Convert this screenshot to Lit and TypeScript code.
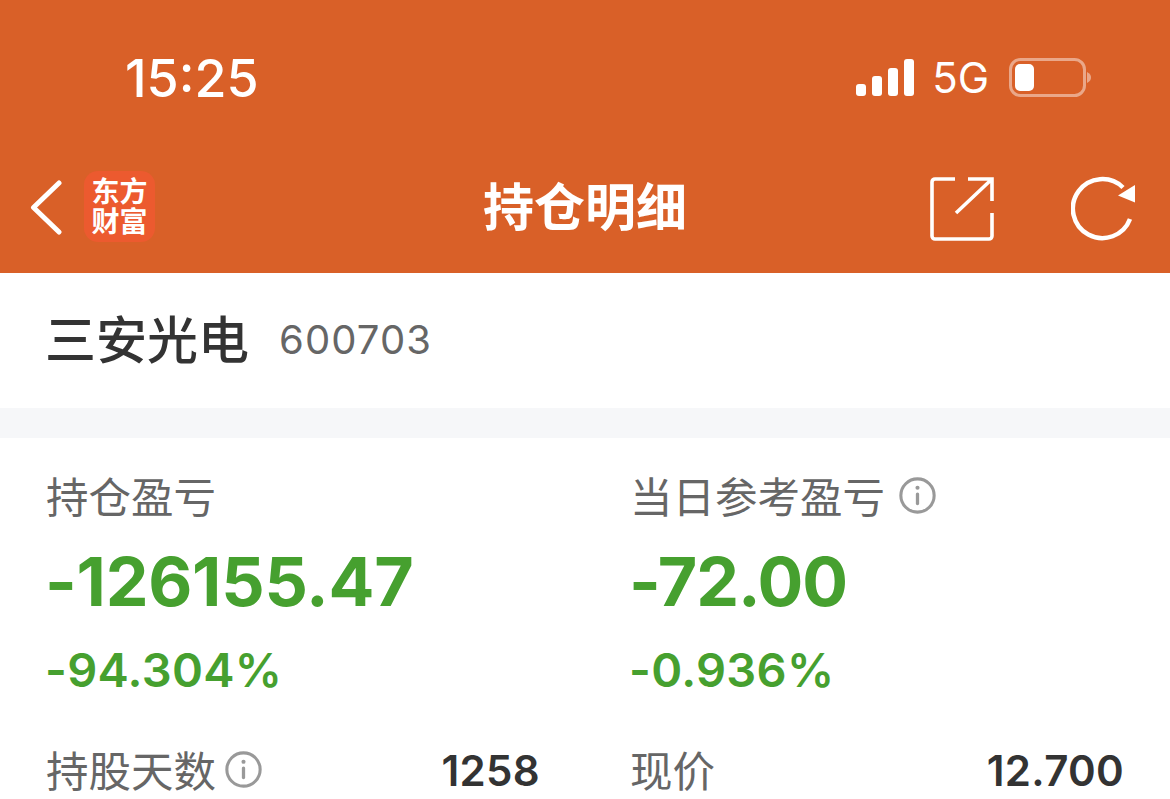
import { LitElement, html, css, svg } from "lit";
import { customElement } from "lit/decorators.js";

const info = svg`<svg class="info" viewBox="0 0 36 36" width="37" height="37"><circle cx="18" cy="18" r="16.2" fill="none" stroke="#999" stroke-width="3"/><circle cx="18" cy="10.5" r="2" fill="#999"/><rect x="16.4" y="15" width="3.2" height="12.5" rx="1.6" fill="#999"/></svg>`;

@customElement("app-root")
export class AppRoot extends LitElement {
  static styles = css`
    :host { display: block; width: 1170px; height: 799px; overflow: hidden; background: #fff;
      font-family: Inter, "Noto Sans CJK SC", sans-serif; }
    .head { background: #d96028; height: 273px; color: #fff; display: flex; flex-direction: column; }
    .status { height: 153px; display: flex; align-items: flex-start; padding: 53px 80px 0 125px; box-sizing: border-box; }
    .time { font-size: 52px; line-height: 52px; font-weight: 500; flex: 1; }
    .sig { margin: 6px 18px 0 0; display: block; }
    .net { font-size: 42px; line-height: 50px; font-weight: 400; margin: 0 20px 0 0; }
    .batt { margin-top: 5px; margin-right: -1px; display: block; }
    .nav { flex: 1; display: flex; align-items: flex-start; position: relative; padding: 20px 35px 0 30px; }
    .back { margin-top: 7px; display: block; }
    .logo { width: 71px; height: 71px; margin: -2px 0 0 18px; box-sizing: border-box; background: #ec5a2f; border-radius: 14px;
      font-size: 28px; line-height: 30px; font-weight: 700; text-align: center; padding-top: 4px;
      font-family: "Noto Sans CJK SC", sans-serif; }
    .title { position: absolute; left: 200px; right: 200px; top: 21px; text-align: center; font-size: 51px; line-height: 60px; font-weight: 700;
      font-family: "Noto Sans CJK SC", sans-serif; }
    .spacer { flex: 1; }
    .share { margin: 4px 77px 0 0; display: block; }
    .refresh { margin-top: 3px; display: block; }
    .name { height: 135px; display: flex; align-items: center; padding: 0 0 0 45px; gap: 30px; }
    .name b { font-size: 51px; font-weight: 500; color: #333; margin-bottom: 8px; font-family: "Noto Sans CJK SC", sans-serif; }
    .name span { font-size: 40px; color: #666; letter-spacing: 1.1px; margin-bottom: 2px; }
    .gap { height: 30px; background: #f6f7f9; }
    .grid { display: grid; grid-template-columns: 494px 494px; column-gap: 90px; padding: 30px 0 0 46px; }
    .label { font-size: 42.5px; line-height: 54px; color: #666; display: flex; align-items: center; gap: 14px;
      font-family: "Noto Sans CJK SC", sans-serif; }
    .big { font-size: 68px; line-height: 88px; font-weight: 650; color: #46a02f; letter-spacing: -1.1px; margin: 15px 0 0 -1px; }
    .big.long { letter-spacing: -0.25px; }
    .pct { font-size: 47px; line-height: 60px; font-weight: 600; color: #46a02f; letter-spacing: 0.3px; margin: 15px 0 0 -1px; }
    .row { display: flex; justify-content: space-between; align-items: center; margin-top: 42px; }
    .row strong { font-size: 42px; font-weight: 600; color: #333; margin-top: 2px; letter-spacing: 0.3px; }
    .row .info { margin-left: -5px; }
    .info { display: block; }
  `;
  render() {
    return html`
      <div class="head">
        <div class="status">
          <div class="time">15:25</div>
          <svg class="sig" width="58" height="38" viewBox="0 0 58 38" fill="#fff">
            <rect x="0" y="25" width="10" height="12" rx="3"/><rect x="16" y="17" width="10" height="20" rx="3"/><rect x="32" y="9" width="10" height="28" rx="3"/><rect x="48" y="0" width="10" height="37" rx="3"/>
          </svg>
          <div class="net">5G</div>
          <svg class="batt" width="82" height="40" viewBox="0 0 82 40">
            <rect x="1.500" y="1.500" width="74" height="36" rx="10" fill="none" stroke="#fff" stroke-opacity=".45" stroke-width="3"/>
            <rect x="6" y="6" width="19" height="27" rx="5" fill="#fff"/>
            <path d="M78 14c3 1.500 4 3.500 4 5.500s-1 4-4 5.500z" fill="#fff" fill-opacity=".45"/>
          </svg>
        </div>
        <div class="nav">
          <svg class="back" width="36" height="56" viewBox="0 0 36 56" fill="none" stroke="#fff" stroke-width="5" stroke-linecap="round" stroke-linejoin="round"><path d="M29 3 3.500 27.500 29 52"/></svg>
          <div class="logo">东方<br />财富</div>
          <div class="title">持仓明细</div>
          <div class="spacer"></div>
          <svg class="share" width="64" height="64" viewBox="0 0 64 64" fill="none" stroke="#fff" stroke-width="3.600"><path d="M25 2H5a3 3 0 0 0-3 3v54a3 3 0 0 0 3 3h54a3 3 0 0 0 3-3V36"/><path d="M38 2h24v22M62 2 26 36"/></svg>
          <svg class="refresh" width="64" height="66" viewBox="0 0 64 66" fill="none"><path d="M59 43A29.500 29.500 0 1 1 52 11.500" stroke="#fff" stroke-width="4.500"/><path d="M64 9v17.500L47 19.500z" fill="#fff"/></svg>
        </div>
      </div>
      <div class="name"><b>三安光电</b><span>600703</span></div>
      <div class="gap"></div>
      <div class="grid">
        <div>
          <div class="label">持仓盈亏</div>
          <div class="big long">-126155.47</div>
          <div class="pct">-94.304%</div>
        </div>
        <div>
          <div class="label">当日参考盈亏 ${info}</div>
          <div class="big">-72.00</div>
          <div class="pct">-0.936%</div>
        </div>
        <div class="row"><div class="label">持股天数 ${info}</div><strong>1258</strong></div>
        <div class="row"><div class="label">现价</div><strong>12.700</strong></div>
      </div>
    `;
  }
}
